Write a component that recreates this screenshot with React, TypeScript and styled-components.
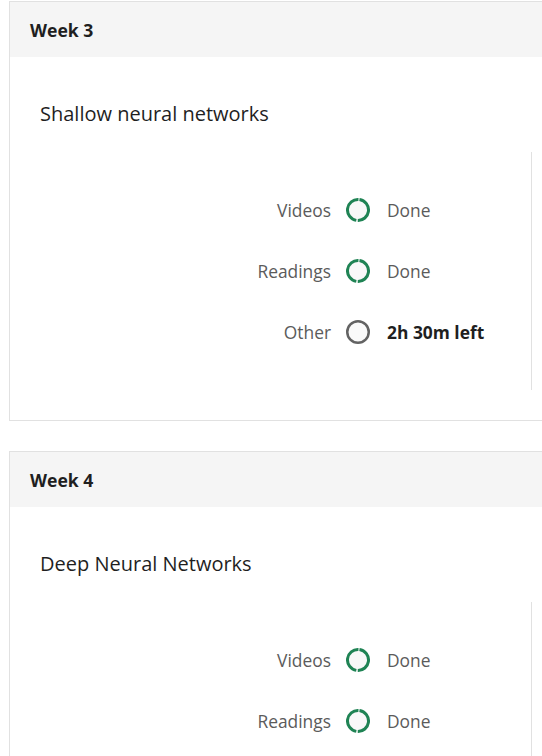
import React from "react";
import styled, { createGlobalStyle } from "styled-components";

const GlobalStyle = createGlobalStyle`
    html, body {
        margin: 0;
        padding: 0;
        height: 100%;
        overflow: hidden;
        background: #ffffff;
    }
    body {
        font-family: "Open Sans", "Noto Sans", "Liberation Sans", sans-serif;
        color: #1f1f1f;
    }
`;

const Page = styled.div`
    display: flex;
    flex-direction: column;
    gap: 30px;
    padding: 1px 0 0 9px;
    width: 560px;
`;

const Card = styled.section`
    border: 1px solid #e1e1e1;
    background: #ffffff;
`;

const CardHeader = styled.header`
    display: flex;
    align-items: center;
    height: 55px;
    padding: 0 20px;
    background: #f5f5f5;
    font-size: 17.6px;
    font-weight: 700;
    color: #1f1f1f;
`;

const CardBody = styled.div`
    padding: 43px 0 30px 0;
`;

const Title = styled.h2`
    margin: 0 0 24px 30px;
    font-size: 20px;
    font-weight: 400;
    line-height: 28px;
    color: #1f1f1f;
`;

const Progress = styled.div`
    display: flex;
    flex-direction: column;
    gap: 25px;
    width: 521px;
    padding: 40px 0;
    border-right: 1px solid #e1e1e1;
`;

const Row = styled.div`
    display: flex;
    align-items: center;
    height: 36px;
`;

const Label = styled.span`
    width: 321px;
    text-align: right;
    font-size: 17.4px;
    color: #5b5b5b;
`;

const IconWrap = styled.span`
    display: flex;
    margin: 0 17px 0 15px;
`;

const Status = styled.span<{ $bold?: boolean }>`
    font-size: 17.4px;
    font-weight: ${(p) => (p.$bold ? 700 : 400)};
    color: ${(p) => (p.$bold ? "#1f1f1f" : "#5b5b5b")};
`;

const DoneRing: React.FC = () => (
    <svg width="24" height="24" viewBox="0 0 24 24">
        <circle cx="12" cy="12" r="10.5" fill="#f8f8f8" />
        <circle
            cx="12"
            cy="12"
            r="10.5"
            fill="none"
            stroke="#1f8354"
            strokeWidth="3"
            strokeDasharray="31.5 1.5"
            transform="rotate(-82 12 12)"
        />
    </svg>
);

const PendingRing: React.FC = () => (
    <svg width="24" height="24" viewBox="0 0 24 24">
        <circle cx="12" cy="12" r="10.75" fill="#fafafa" stroke="#636363" strokeWidth="2.5" />
    </svg>
);

type Item = { label: string; status: string; done: boolean };

const weeks: { week: string; title: string; items: Item[] }[] = [
    {
        week: "Week 3",
        title: "Shallow neural networks",
        items: [
            { label: "Videos", status: "Done", done: true },
            { label: "Readings", status: "Done", done: true },
            { label: "Other", status: "2h 30m left", done: false },
        ],
    },
    {
        week: "Week 4",
        title: "Deep Neural Networks",
        items: [
            { label: "Videos", status: "Done", done: true },
            { label: "Readings", status: "Done", done: true },
            { label: "Other", status: "2h 30m left", done: false },
        ],
    },
];

const App: React.FC = () => (
    <>
        <GlobalStyle />
        <Page>
            {weeks.map((w) => (
                <Card key={w.week}>
                    <CardHeader>{w.week}</CardHeader>
                    <CardBody>
                        <Title>{w.title}</Title>
                        <Progress>
                            {w.items.map((item) => (
                                <Row key={item.label}>
                                    <Label>{item.label}</Label>
                                    <IconWrap>{item.done ? <DoneRing /> : <PendingRing />}</IconWrap>
                                    <Status $bold={!item.done}>{item.status}</Status>
                                </Row>
                            ))}
                        </Progress>
                    </CardBody>
                </Card>
            ))}
        </Page>
    </>
);

export default App;
